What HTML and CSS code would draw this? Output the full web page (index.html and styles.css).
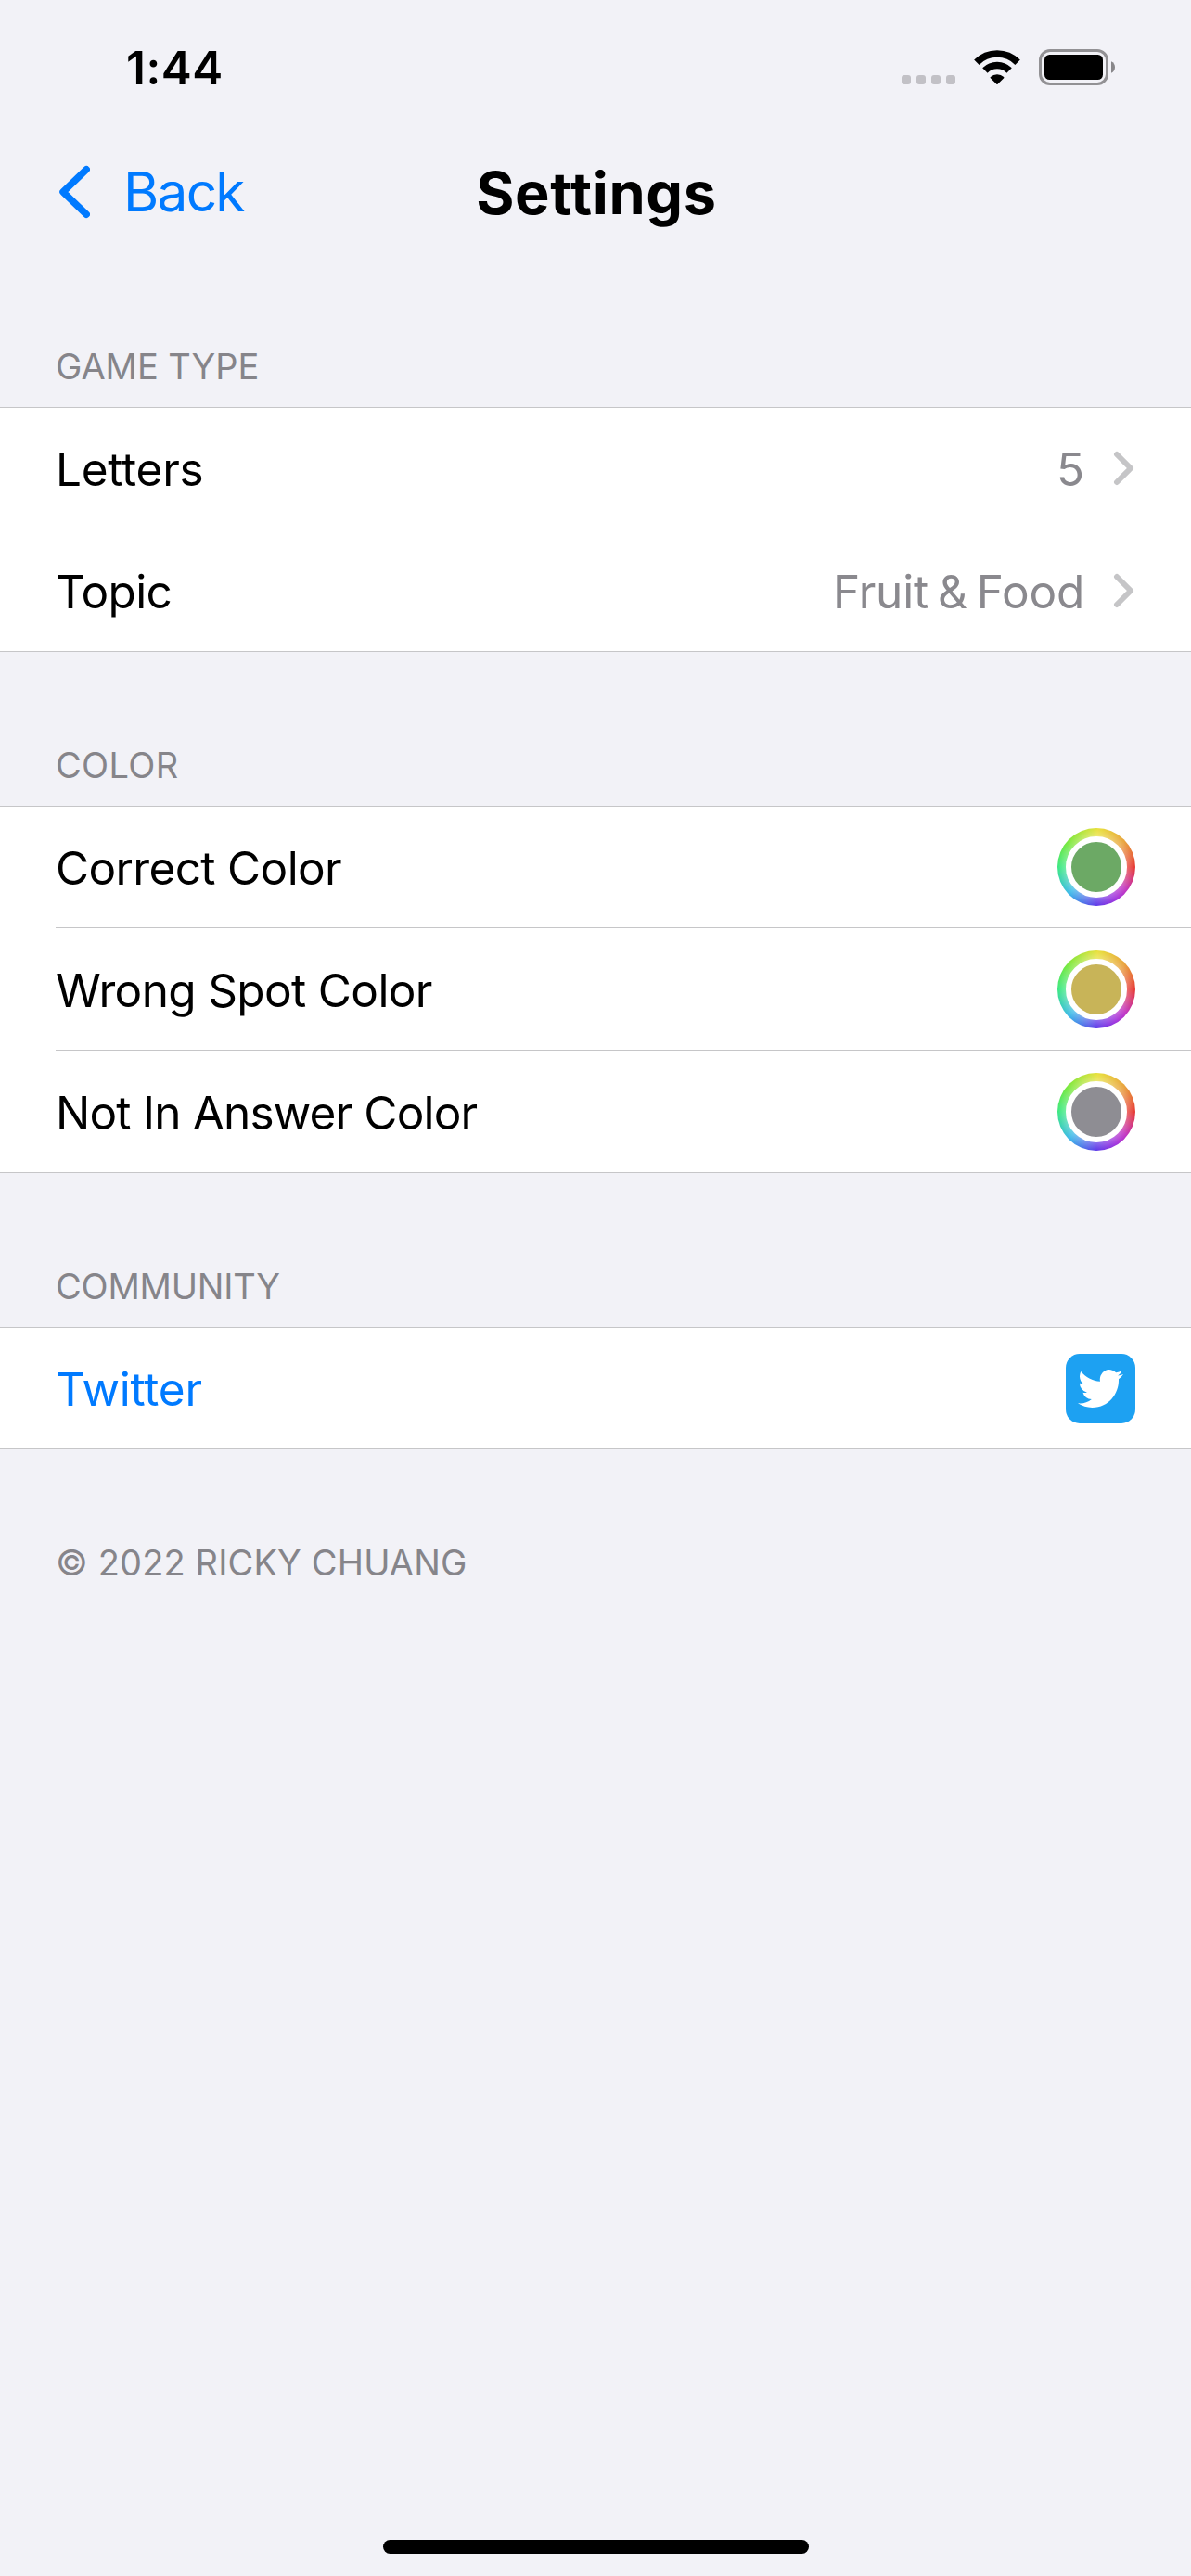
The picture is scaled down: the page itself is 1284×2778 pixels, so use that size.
FILE: index.html
```html
<!DOCTYPE html>
<html lang="en">
<head>
<meta charset="utf-8">
<title>Settings</title>
<link rel="stylesheet" href="styles.css">
</head>
<body>
<div class="screen">
  <header class="status">
    <time class="clock">1:44</time>
    <div class="indicators">
      <div class="cellular"><i></i><i></i><i></i><i></i></div>
      <svg class="wifi" width="50" height="38" viewBox="0 0 50 38">
        <path d="M2.9 13.2A31.2 31.2 0 0 1 47.1 13.2" fill="none" stroke="#000" stroke-width="7.7"/>
        <path d="M11.9 22A18.4 18.4 0 0 1 38.1 22" fill="none" stroke="#000" stroke-width="7.6"/>
        <path d="M18.4 29.6a9.8 9.8 0 0 1 13.2 0L25 36.2z" stroke="#000" stroke-width="1.6" stroke-linejoin="round"/>
      </svg>
      <svg class="battery" width="83" height="39" viewBox="0 0 83 39">
        <rect x="1.5" y="1.5" width="72" height="36" rx="10.5" fill="none" stroke="#929194" stroke-width="3"/>
        <rect x="6" y="6" width="63" height="27" rx="5.5"/>
        <path d="M78 13.2c2.600 1 4 3.400 4 6.300s-1.400 5.300-4 6.300z" fill="#88878a"/>
      </svg>
    </div>
  </header>

  <nav class="navbar">
    <a class="back">
      <svg width="34" height="58" viewBox="0 0 34 58"><path d="M30.200 4.800 5 29 30.200 53.200" fill="none" stroke="#007aff" stroke-width="7.500" stroke-linecap="round" stroke-linejoin="round"/></svg>
      <span>Back</span>
    </a>
    <h1 class="title">Settings</h1>
  </nav>

  <main>
    <section>
      <h2 class="heading">GAME TYPE</h2>
      <div class="group">
        <div class="row">
          <span class="label loose">Letters</span>
          <span class="value">5</span>
          <svg class="chevron" width="23" height="38" viewBox="0 0 23 38"><path d="M4 4 19 19 4 34" fill="none" stroke="#c5c5c7" stroke-width="6" stroke-linecap="round" stroke-linejoin="round"/></svg>
        </div>
        <div class="row">
          <span class="label">Topic</span>
          <span class="value">Fruit &amp; Food</span>
          <svg class="chevron" width="23" height="38" viewBox="0 0 23 38"><path d="M4 4 19 19 4 34" fill="none" stroke="#c5c5c7" stroke-width="6" stroke-linecap="round" stroke-linejoin="round"/></svg>
        </div>
      </div>
    </section>

    <section>
      <h2 class="heading wide">COLOR</h2>
      <div class="group">
        <div class="row"><span class="label">Correct Color</span><span class="well"><span class="swatch correct"></span></span></div>
        <div class="row"><span class="label">Wrong Spot Color</span><span class="well"><span class="swatch misplaced"></span></span></div>
        <div class="row"><span class="label tight">Not In Answer Color</span><span class="well"><span class="swatch absent"></span></span></div>
      </div>
    </section>

    <section>
      <h2 class="heading snug">COMMUNITY</h2>
      <div class="group">
        <div class="row">
          <a class="label link loose">Twitter</a>
          <span class="twitter">
            <svg width="49" height="41" viewBox="0 2.200 24 19.600" preserveAspectRatio="none"><path fill="#fff" d="M23.953 4.570a10 10 0 01-2.825.775 4.958 4.958 0 002.163-2.723c-.951.555-2.005.959-3.127 1.184a4.920 4.920 0 00-8.384 4.482C7.690 8.095 4.067 6.130 1.640 3.162a4.822 4.822 0 00-.666 2.475c0 1.710.870 3.213 2.188 4.096a4.904 4.904 0 01-2.228-.616v.060a4.923 4.923 0 003.946 4.827 4.996 4.996 0 01-2.212.085 4.936 4.936 0 004.604 3.417 9.867 9.867 0 01-6.102 2.105c-.390 0-.779-.023-1.170-.067a13.995 13.995 0 007.557 2.209c9.053 0 13.998-7.496 13.998-13.985 0-.210 0-.420-.015-.630A9.935 9.935 0 0024 4.590z"/></svg>
          </span>
        </div>
      </div>
    </section>

    <p class="heading footnote">© 2022 RICKY CHUANG</p>
  </main>

  <div class="home-bar"></div>
</div>
</body>
</html>
```
FILE: styles.css
```css
* {
  box-sizing: border-box;
  margin: 0;
}

body {
  font-family: Inter, "Liberation Sans", sans-serif;
  font-size: 49.5px;
  color: #000;
  background: #f2f2f7;
}

.screen {
  display: flex;
  flex-direction: column;
  height: 2778px;
  padding-bottom: 24px;
}

/* Status bar */
.status {
  display: flex;
  justify-content: space-between;
  height: 141px;
  padding: 43px 81px 0 136px;
}

.clock {
  font-weight: 600;
  line-height: 60px;
  letter-spacing: 0.5px;
}

.indicators {
  display: flex;
  align-items: flex-start;
  padding-top: 10px;
}

.cellular {
  display: flex;
  gap: 6px;
  margin: 28px 20px 0 0;
}

.cellular i {
  width: 10px;
  height: 10px;
  border-radius: 3px;
  background: #c2c1c6;
}

.wifi {
  margin: 1px 20px 0 0;
}

/* Navigation bar */
.navbar {
  display: grid;
  grid-template-columns: 1fr auto 1fr;
  align-items: center;
  height: 132px;
  padding: 0 60px;
}

.back {
  display: flex;
  align-items: center;
  gap: 36px;
  padding-left: 3px;
  font-size: 58.5px;
  line-height: 70px;
  letter-spacing: -1.75px;
  color: #007aff;
}

.title {
  padding: 2px 0 0 2px;
  font-size: 63px;
  font-weight: 700;
  line-height: 76px;
  letter-spacing: 0.7px;
}

/* Grouped list */
.heading {
  padding: 99px 60px 21px;
  font-size: 38px;
  font-weight: 400;
  line-height: 46px;
  letter-spacing: -0.05px;
  color: #86858a;
}

.heading.snug {
  letter-spacing: -0.2px;
}

.heading.wide {
  letter-spacing: 0.35px;
}

.heading.footnote {
  letter-spacing: 0.14px;
}

.group {
  border-top: 1px solid #c6c6c8;
  border-bottom: 1px solid #c6c6c8;
  background: #fff;
}

.row {
  display: flex;
  align-items: center;
  height: 131px;
  margin-left: 60px;
  padding-right: 60px;
}

.row:first-child {
  height: 130px;
}

.row + .row {
  height: 132px;
  border-top: 1px solid #c6c6c8;
}

.label {
  flex: 1;
  padding-top: 2px;
  line-height: 60px;
  letter-spacing: -0.65px;
}

.label.loose {
  letter-spacing: -0.25px;
}

.label.tight {
  letter-spacing: -0.84px;
}

.link {
  color: #007aff;
}

.value {
  margin-right: 31px;
  padding-top: 2px;
  line-height: 60px;
  letter-spacing: -0.2px;
  word-spacing: -3.6px;
  color: #8a898e;
}

.chevron {
  margin-right: 1px;
}

.well {
  display: grid;
  place-items: center;
  width: 84px;
  height: 84px;
  border-radius: 50%;
  background:
    radial-gradient(circle, rgba(255, 255, 255, 0.28) 33px, rgba(255, 255, 255, 0) 42px),
    conic-gradient(from 90deg, #e6352f, #c030c0 38deg, #a030dc 58deg, #5c38e8 90deg, #38b8e8 136deg, #38e880 180deg, #74e838 220deg, #e8e038 272deg, #e8a038 318deg, #e6352f);
}

.swatch {
  width: 66px;
  height: 66px;
  border: 6px solid #fff;
  border-radius: 50%;
}

.correct { background: #6ca965; }
.misplaced { background: #c8b458; }
.absent { background: #8e8d93; }

.twitter {
  display: grid;
  place-items: center;
  width: 75px;
  height: 75px;
  border-radius: 15px;
  background: #1da1f2;
}

.home-bar {
  width: 459px;
  height: 15px;
  margin: auto auto 0;
  border-radius: 8px;
  background: #000;
}
```
